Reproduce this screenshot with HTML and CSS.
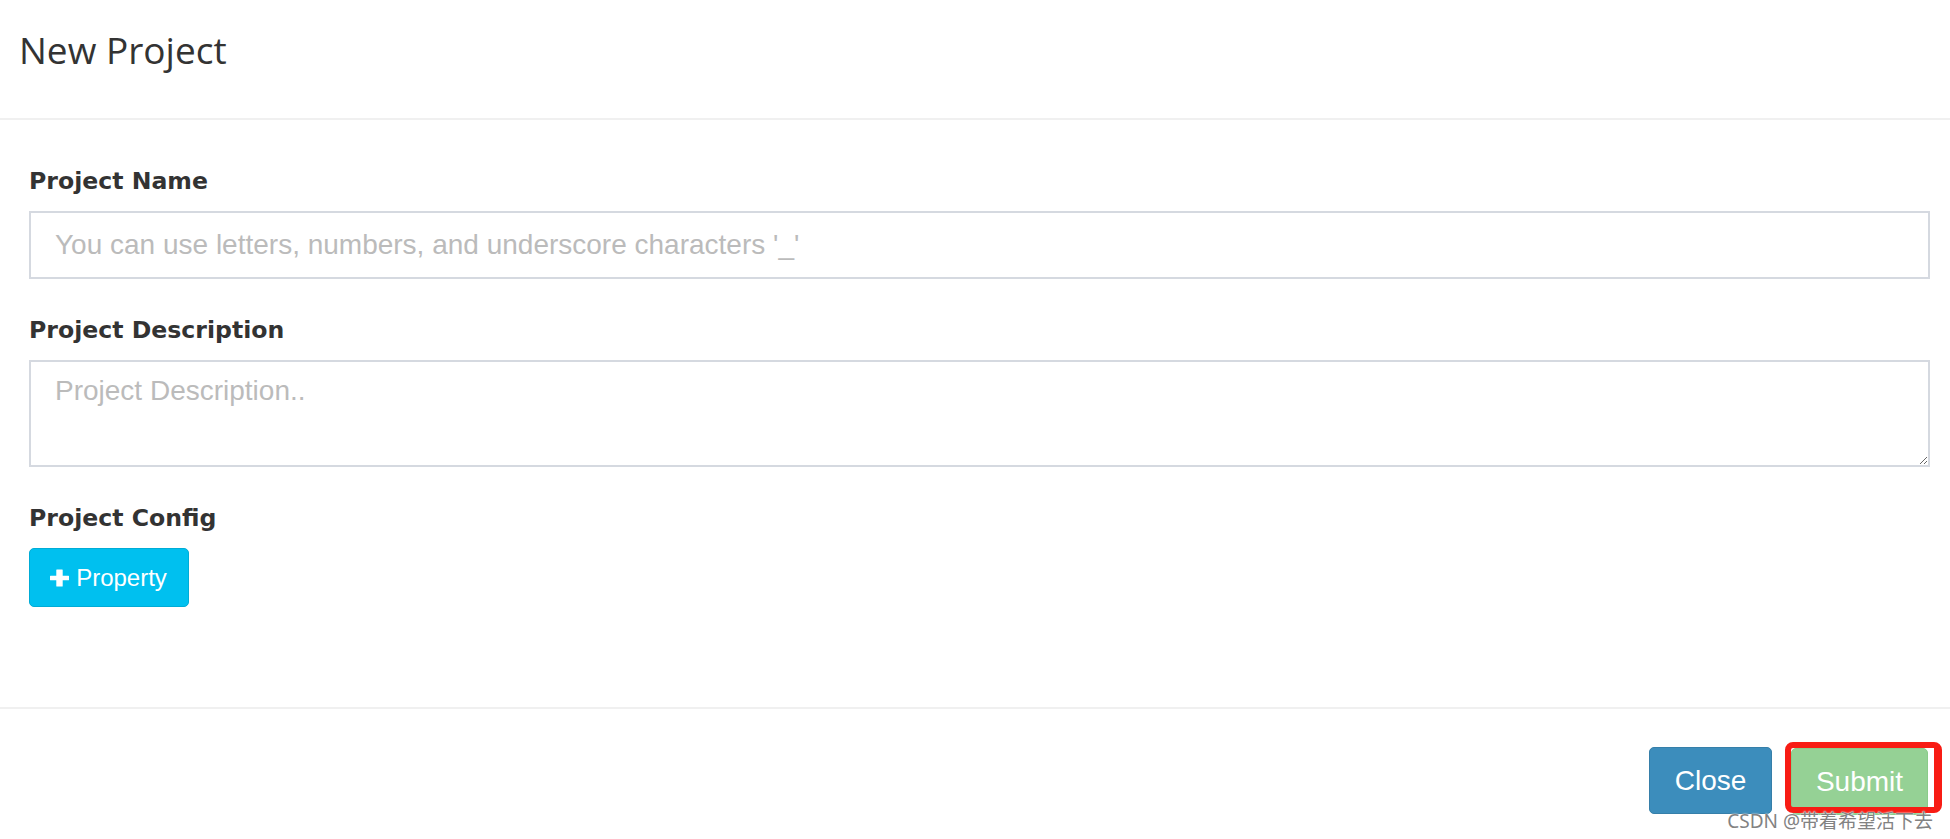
FILE: index.html
```html
<!DOCTYPE html>
<html lang="en">
<head>
<meta charset="utf-8">
<title>New Project</title>
<link rel="stylesheet" href="styles.css">
</head>
<body>
<div class="modal">
  <header class="modal-header">
    <h4 class="modal-title">New Project</h4>
  </header>
  <form class="modal-body">
    <div class="form-group">
      <label class="form-label" for="pname">Project Name</label>
      <input class="form-control" id="pname" type="text" placeholder="You can use letters, numbers, and underscore characters '_'">
    </div>
    <div class="form-group">
      <label class="form-label" for="pdesc">Project Description</label>
      <textarea class="form-control form-textarea" id="pdesc" placeholder="Project Description.."></textarea>
    </div>
    <div class="form-group">
      <span class="form-label">Project Config</span>
      <div class="config-row">
        <button type="button" class="btn btn-info">
          <svg class="icon-plus" viewBox="0 0 19 18" width="19" height="18" aria-hidden="true"><path d="M6.8 0.5h5.4a0.5 0.5 0 0 1 .5.5v5.8h5.8a0.5 0.5 0 0 1 .5.5v3.4a0.5 0.5 0 0 1-.5.5h-5.8v5.8a0.5 0.5 0 0 1-.5.5H6.8a0.5 0.5 0 0 1-.5-.5v-5.8H0.5a0.5 0.5 0 0 1-.5-.5V7.3a0.5 0.5 0 0 1 .5-.5h5.8V1a0.5 0.5 0 0 1 .5-.5z" fill="#fff"/></svg>
          <span>Property</span>
        </button>
      </div>
    </div>
  </form>
  <footer class="modal-footer">
    <button type="button" class="btn btn-primary btn-lg">Close</button>
    <span class="submit-wrap">
      <button type="button" class="btn btn-success btn-lg" disabled>Submit</button>
      <span class="mark"></span>
    </span>
  </footer>
  <div class="watermark">CSDN @带着希望活下去</div>
</div>
</body>
</html>
```
FILE: styles.css
```css
* { box-sizing: border-box; }

html, body {
  margin: 0;
  padding: 0;
  background: #fff;
}

body {
  font-family: "Liberation Sans", Arial, sans-serif;
  color: #333;
}

.modal {
  position: relative;
  width: 1950px;
  height: 839px;
  display: flex;
  flex-direction: column;
  overflow: hidden;
}

.modal-header {
  height: 120px;
  padding: 29px 19px 0;
  border-bottom: 2px solid #f0f0f0;
}

.modal-title {
  margin: 0;
  font-family: "Open Sans", "Noto Sans", sans-serif;
  font-weight: 400;
  font-size: 37px;
  line-height: 41px;
  color: #333;
}

.modal-body {
  margin: 0;
  padding: 47px 20px 100px 29px;
  display: flex;
  flex-direction: column;
  gap: 37px;
}

.form-group {
  display: flex;
  flex-direction: column;
}

.form-label {
  display: block;
  margin-bottom: 16px;
  font-family: "DejaVu Sans", sans-serif;
  font-weight: 700;
  font-size: 23.6px;
  line-height: 28px;
  color: #333;
}

.form-control {
  display: block;
  width: 100%;
  height: 68px;
  margin: 0;
  padding: 0 24px;
  border: 2px solid #d5d9e0;
  border-radius: 0;
  background: #fff;
  font-family: "Liberation Sans", Arial, sans-serif;
  font-size: 28px;
  color: #555;
  outline: none;
}

.form-control::placeholder {
  color: #bbb;
  opacity: 1;
}

.form-textarea {
  height: 107px;
  padding: 13px 24px;
  line-height: normal;
  resize: vertical;
}

.config-row {
  display: flex;
}

.btn {
  display: inline-flex;
  align-items: center;
  justify-content: center;
  margin: 0;
  border: 1px solid transparent;
  border-radius: 5px;
  font-family: "Liberation Sans", Arial, sans-serif;
  color: #fff;
  cursor: pointer;
}

.btn-info {
  width: 160px;
  height: 59px;
  padding: 0 20px 0 19px;
  gap: 7px;
  background: #00c0ef;
  border-color: #00acd6;
  font-size: 24px;
}

.icon-plus {
  display: block;
  flex: none;
  width: 19px;
  height: 18px;
}

.modal-footer {
  display: flex;
  justify-content: flex-end;
  align-items: flex-start;
  gap: 19px;
  padding: 38px 22px 0 0;
  border-top: 2px solid #f0f0f0;
  flex: 1;
}

.btn-lg {
  height: 67px;
  padding: 0 25px;
  font-size: 28px;
}

.btn-primary {
  width: 123px;
  background: #3c8dbc;
  border-color: #367fa9;
}

.btn-success {
  width: 137px;
  margin-top: 1px;
  background: #95d195;
  border-color: #89cc89;
  cursor: not-allowed;
}

.submit-wrap {
  position: relative;
  display: inline-flex;
}

.mark {
  position: absolute;
  left: -6px;
  top: -5px;
  right: -14px;
  bottom: 2px;
  border: 6px solid #f81c14;
  border-right-width: 8px;
  border-radius: 8px;
  pointer-events: none;
}

.watermark {
  position: absolute;
  right: 17px;
  bottom: 8px;
  font-family: "Noto Sans", "Noto Sans CJK SC", sans-serif;
  font-size: 19px;
  line-height: 19px;
  color: #828282;
  text-shadow: 0 0 2px #fff, 0 0 1px #fff;
  white-space: nowrap;
}
```
